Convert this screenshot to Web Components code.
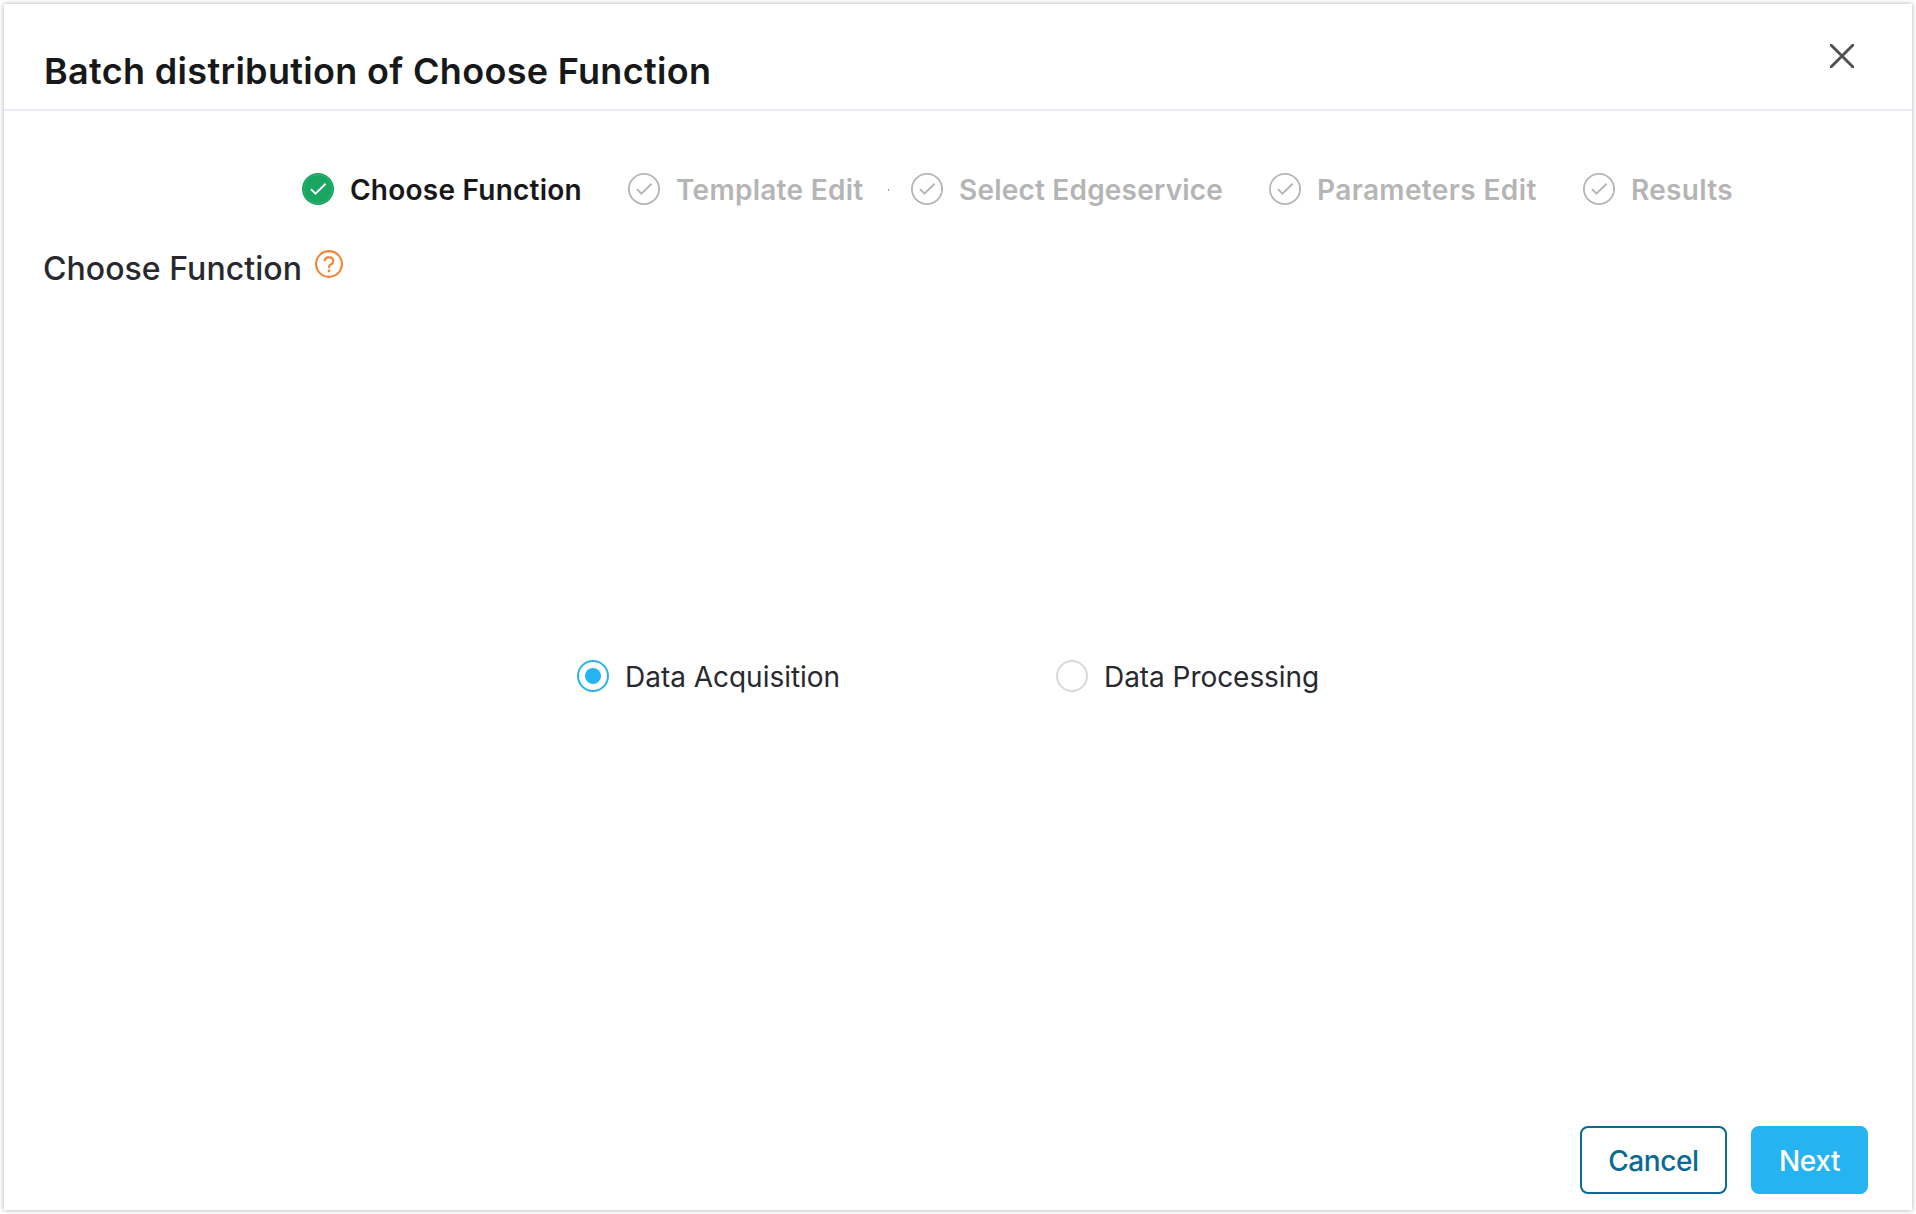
<!DOCTYPE html>
<html lang="en">
<head>
<meta charset="utf-8">
<title>Batch distribution</title>
<style>
html, body { margin: 0; height: 100%; background: #fff; }
body { font-family: Inter, "Liberation Sans", sans-serif; color: #27292e; overflow: hidden; }
</style>
</head>
<body>
<batch-dialog heading="Batch distribution of Choose Function">
  <step-bar slot="steps">
    <step-item state="done" style="--w:326px;--ls:.24px">Choose Function</step-item>
    <step-item style="--w:283px;--ls:.28px" dot>Template Edit</step-item>
    <step-item style="--w:358px;--ls:.2px">Select Edgeservice</step-item>
    <step-item style="--w:314px;--ls:.38px">Parameters Edit</step-item>
    <step-item style="--w:150px;--ls:.3px">Results</step-item>
  </step-bar>
  <section-title slot="title">Choose Function</section-title>
  <radio-option checked style="--ls:-.02px">Data Acquisition</radio-option>
  <radio-option style="--ls:-.05px">Data Processing</radio-option>
  <action-button slot="actions" style="--w:147px">Cancel</action-button>
  <action-button slot="actions" primary style="--w:117px">Next</action-button>
</batch-dialog>
<script>
const define = (name, render) => customElements.define(name, class extends HTMLElement {
  constructor() {
    super();
    this.attachShadow({ mode: 'open' });
  }
  connectedCallback() {
    this.shadowRoot.innerHTML = render(this);
  }
});

define('batch-dialog', el => `
<style>
:host { display: flex; box-sizing: border-box; width: 1916px; height: 1214px; padding: 4px; }
.card { flex: 1; display: flex; flex-direction: column; background: #fff; box-shadow: 0 0 5px rgba(0,0,0,.33); }
header { display: flex; justify-content: space-between; align-items: flex-start; box-sizing: border-box; height: 107px; padding: 40px 58px 0 40px; border-bottom: 2px solid #e9e9f7; }
h1 { margin: 0; font-size: 36px; line-height: 54px; font-weight: 600; letter-spacing: .32px; color: #17181a; white-space: nowrap; }
header svg { display: block; width: 24px; height: 24px; }
main { flex: 1; display: flex; flex-direction: column; }
.options { flex: 1; display: flex; align-items: center; justify-content: flex-start; padding: 0 0 64px 573px; }
.options ::slotted(radio-option) { width: 479px; }
footer { display: flex; justify-content: flex-end; gap: 24px; padding: 0 44px 16px; }
</style>
<div class="card">
  <header><h1>${el.getAttribute('heading')}</h1>
    <svg viewBox="0 0 24 24"><path d="M1 1 23 23M23 1 1 23" fill="none" stroke="#515151" stroke-width="2.9" stroke-linecap="round"/></svg>
  </header>
  <main>
    <slot name="steps"></slot>
    <slot name="title"></slot>
    <div class="options"><slot></slot></div>
  </main>
  <footer><slot name="actions"></slot></footer>
</div>`);

define('step-bar', () => `
<style>:host { display: flex; padding: 62px 0 0 298px; height: 34px; }</style><slot></slot>`);

define('step-item', el => {
  const done = el.getAttribute('state') === 'done';
  return `
<style>
:host { display: flex; align-items: flex-start; flex: none; width: var(--w); height: 34px; font-size: 28px; line-height: 34px; font-weight: 600; letter-spacing: var(--ls); color: ${done ? '#17181a' : '#b5b5b5'}; white-space: nowrap; }
svg { flex: none; width: 32px; height: 32px; margin-right: 16px; }
i { width: 1px; height: 2px; margin: 16px 22px 0 auto; background: #999; }
</style>
<svg viewBox="0 0 32 32" fill="none">
  ${done ? '<circle cx="16" cy="16" r="16" fill="#18a661"/><circle cx="16" cy="16" r="14.2" stroke="#48b981" stroke-width=".5"/>' : '<circle cx="16" cy="16" r="15.1" stroke="#b5b5b5" stroke-width="1.8"/>'}
  <path d="M9 16.2 13.4 20.6 23.6 10.7" stroke="${done ? '#fff' : '#b5b5b5'}" stroke-width="1.9"/>
</svg><span><slot></slot></span>${el.hasAttribute('dot') ? '<i></i>' : ''}`;
});

define('section-title', () => `
<style>
:host { display: flex; align-items: flex-start; padding: 40px 40px 0 39px; height: 45px; font-size: 32px; line-height: 44px; font-weight: 500; letter-spacing: .05px; }
svg { width: 28px; height: 28px; margin: 3px 0 0 13px; }
</style>
<span><slot></slot></span>
<svg viewBox="0 0 28 28" fill="none" stroke="#f98332" stroke-width="2.1"><circle cx="14" cy="14" r="12.9"/><path d="M9.7 11.2C9.7 8.8 11.4 7.4 14 7.4s4.3 1.5 4.3 3.7c0 1.8-1.2 2.8-2.4 3.4-1.2.6-1.9 1.2-1.9 2.4v1"/><circle cx="14" cy="20.9" r="1.4" fill="#f98332" stroke="none"/></svg>`);

define('radio-option', el => {
  const on = el.hasAttribute('checked');
  return `
<style>
:host { display: flex; align-items: flex-start; height: 34px; font-size: 28px; line-height: 34px; letter-spacing: var(--ls); white-space: nowrap; }
.ring { flex: none; display: flex; align-items: center; justify-content: center; box-sizing: border-box; width: 32px; height: 32px; border: 2px solid ${on ? '#26b3f2' : '#d8d8e0'}; border-radius: 50%; margin-right: 16px; }
.mark { width: 16px; height: 16px; border-radius: 50%; background: #26b3f2; }
</style>
<span class="ring">${on ? '<span class="mark"></span>' : ''}</span><span><slot></slot></span>`;
});

define('action-button', el => `
<style>
:host { display: block; }
button { display: block; box-sizing: border-box; width: var(--w); height: 68px; padding: 2px 0 0; border: 2px solid ${el.hasAttribute('primary') ? '#26b3f2' : '#0b6a92'}; border-radius: 8px; background: ${el.hasAttribute('primary') ? '#26b3f2' : '#fff'}; color: ${el.hasAttribute('primary') ? '#fff' : '#0b6a92'}; font: 500 28px/62px Inter, "Liberation Sans", sans-serif; letter-spacing: -.4px; }
</style>
<button><slot></slot></button>`);
</script>
</body>
</html>
